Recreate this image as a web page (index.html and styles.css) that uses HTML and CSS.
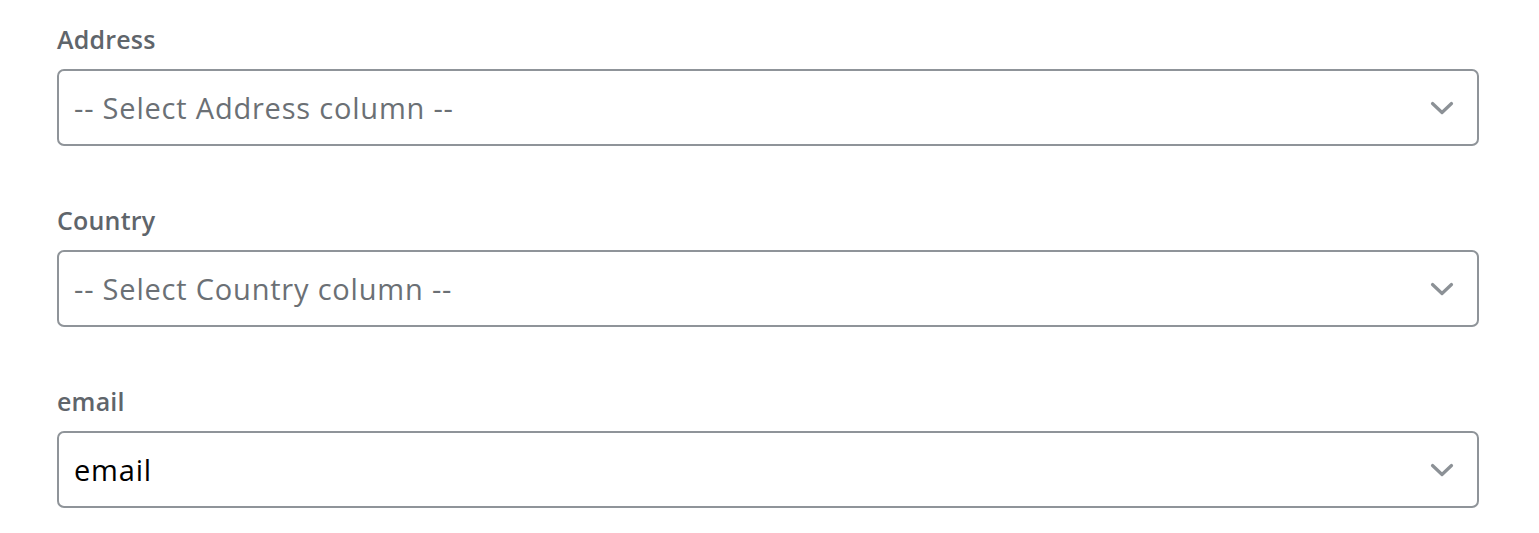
FILE: index.html
```html
<!DOCTYPE html>
<html>
<head>
<meta charset="utf-8">
<link rel="stylesheet" href="styles.css">
</head>
<body>
<form class="form">
  <div class="field">
    <label class="label">Address</label>
    <div class="select">
      <span class="value placeholder">-- Select Address column --</span>
      <svg class="chevron" width="26" height="16" viewBox="0 0 26 16"><path d="M3.5 3.5 L13 12.5 L22.5 3.5" fill="none" stroke="#8c9196" stroke-width="3.2" stroke-linecap="round" stroke-linejoin="round"/></svg>
    </div>
  </div>
  <div class="field">
    <label class="label">Country</label>
    <div class="select">
      <span class="value placeholder">-- Select Country column --</span>
      <svg class="chevron" width="26" height="16" viewBox="0 0 26 16"><path d="M3.5 3.5 L13 12.5 L22.5 3.5" fill="none" stroke="#8c9196" stroke-width="3.2" stroke-linecap="round" stroke-linejoin="round"/></svg>
    </div>
  </div>
  <div class="field">
    <label class="label">email</label>
    <div class="select">
      <span class="value">email</span>
      <svg class="chevron" width="26" height="16" viewBox="0 0 26 16"><path d="M3.5 3.5 L13 12.5 L22.5 3.5" fill="none" stroke="#8c9196" stroke-width="3.2" stroke-linecap="round" stroke-linejoin="round"/></svg>
    </div>
  </div>
</form>
</body>
</html>
```

FILE: styles.css
```css
html, body {
  margin: 0;
  padding: 0;
  background: #ffffff;
}
.form {
  display: flex;
  flex-direction: column;
  gap: 55px;
  padding: 20px 60px 0 57px;
  font-family: "Open Sans", "Liberation Sans", sans-serif;
}
.field {
  display: flex;
  flex-direction: column;
  gap: 11px;
}
.label {
  font-size: 25px;
  line-height: 38px;
  font-weight: 600;
  color: #5f656b;
  letter-spacing: 0.2px;
}
.select {
  box-sizing: border-box;
  height: 77px;
  border: 2px solid #8f9499;
  border-radius: 7px;
  display: flex;
  align-items: center;
  justify-content: space-between;
  padding: 0 22px 0 15px;
}
.value {
  font-size: 29px;
  letter-spacing: 0.8px;
  color: #000000;
}
.value.placeholder {
  color: #6b7075;
}
.chevron {
  display: block;
}
```
